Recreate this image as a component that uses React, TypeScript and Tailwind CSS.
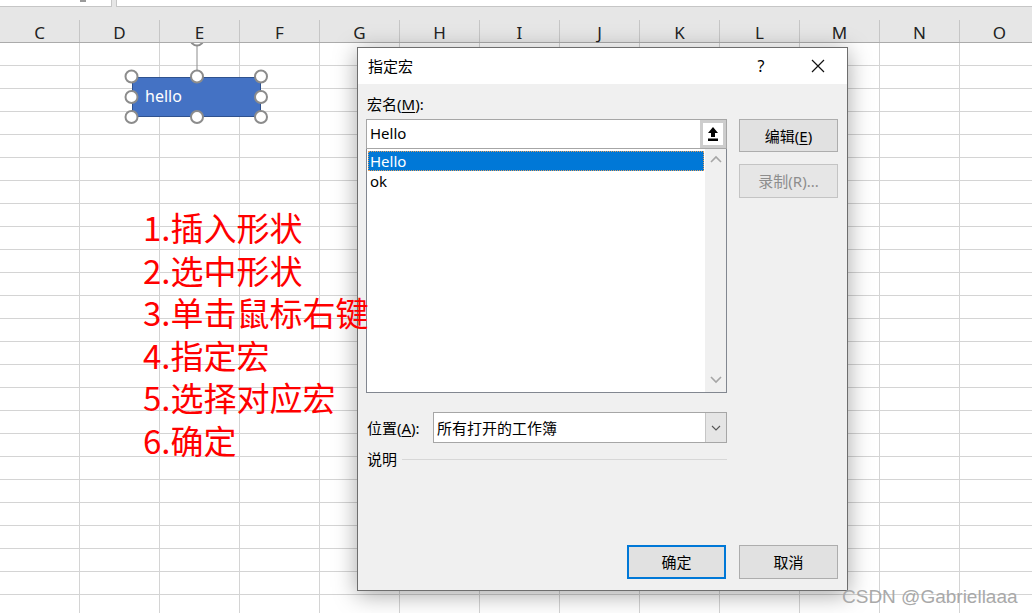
import React from 'react';

const cols = ['C', 'D', 'E', 'F', 'G', 'H', 'I', 'J', 'K', 'L', 'M', 'N', 'O'];
const steps = ['1.插入形状', '2.选中形状', '3.单击鼠标右键', '4.指定宏', '5.选择对应宏', '6.确定'];

const ui = { fontFamily: '"Noto Sans", "Noto Sans CJK SC", sans-serif' };

function Handle({ x, y }: { x: number; y: number }) {
  return <circle cx={x} cy={y} r={6} fill="#fff" stroke="#8c8c8c" strokeWidth={2} />;
}

function Chevron({ up }: { up?: boolean }) {
  return (
    <svg width="12" height="8" viewBox="0 0 12 8">
      <path d={up ? 'M1 7 L6 2 L11 7' : 'M1 1 L6 6 L11 1'} fill="none" stroke="#a6a6a6" strokeWidth="1.6" />
    </svg>
  );
}

function MacroDialog() {
  return (
    <div
      className="absolute left-[357px] top-[47px] w-[491px] h-[544px] border border-[#6e6e6e] bg-[#f0f0f0] flex flex-col shadow-[0_4px_22px_rgba(0,0,0,0.35)] text-[15px] text-black z-10"
      style={ui}
    >
      {/* title bar */}
      <div className="h-[36px] bg-white flex items-center pl-[10px] pr-[6px]">
        <span className="leading-[20px]">指定宏</span>
        <div className="ml-auto w-[46px] h-full flex items-center justify-center text-[16px]">?</div>
        <div className="ml-[11px] w-[46px] h-full flex items-center justify-center">
          <svg width="14" height="14" viewBox="0 0 14 14">
            <path d="M1 1 L13 13 M13 1 L1 13" stroke="#111" strokeWidth="1.2" />
          </svg>
        </div>
      </div>

      <div className="flex-1 flex flex-col px-[8px]">
        <div className="mt-[10px] h-[20px] leading-[20px] pl-[1px]">
          宏名(<span className="underline underline-offset-2">M</span>):
        </div>

        <div className="mt-[5px] flex gap-[12px]">
          <div className="w-[361px] flex flex-col">
            <div className="h-[30px] bg-white border border-[#a6a6a6] flex items-center">
              <span className="pl-[3px] leading-[20px] -mt-[2px]">Hello</span>
              <div className="ml-auto w-[26px] h-full border-[3px] border-[#cdcdcd] bg-white flex items-center justify-center">
                <svg width="12" height="16" viewBox="0 0 12 16">
                  <path d="M6 1 L11 7 L8 7 L8 11 L4 11 L4 7 L1 7 Z" fill="#000" />
                  <rect x="1" y="12.5" width="10" height="2.5" fill="#000" />
                </svg>
              </div>
            </div>
            <div className="h-[244px] bg-white border border-t-0 border-[#828790] flex">
              <div className="flex-1 pt-[2px] px-[1px]">
                <div className="h-[20px] bg-[#0078d7] text-white leading-[20px] pl-[2px] outline outline-1 outline-dotted outline-[#e0a060] -outline-offset-1">
                  Hello
                </div>
                <div className="h-[20px] leading-[20px] pl-[2px]">ok</div>
              </div>
              <div className="w-[21px] bg-[#f0f0f0] flex flex-col items-center justify-between pt-[6px] pb-[8px]">
                <Chevron up />
                <Chevron />
              </div>
            </div>
          </div>

          <div className="w-[99px] flex flex-col">
            <button className="h-[33px] bg-[#e1e1e1] border border-[#adadad] leading-[20px]">
              编辑(<span className="underline underline-offset-2">E</span>)
            </button>
            <button className="mt-[12px] h-[34px] bg-[#e6e6e6] border border-[#c4c4c4] text-[#8d8d8d] leading-[20px]">
              录制(R)...
            </button>
          </div>
        </div>

        <div className="mt-[19px] flex items-center w-[361px]">
          <div className="w-[67px] pl-[1px] leading-[20px]">
            位置(<span className="underline underline-offset-2">A</span>):
          </div>
          <div className="flex-1 h-[31px] bg-white border border-[#a6a6a6] flex items-center">
            <span className="pl-[3px] leading-[20px]">所有打开的工作簿</span>
            <div className="ml-auto w-[21px] h-full bg-[#e5e5e5] border-l border-[#c6c6c6] flex items-center justify-center">
              <svg width="10" height="6" viewBox="0 0 10 6">
                <path d="M1 1 L5 5 L9 1" fill="none" stroke="#555" strokeWidth="1.1" />
              </svg>
            </div>
          </div>
        </div>

        <div className="mt-[6px] h-[20px] flex items-center w-[361px]">
          <span className="pl-[1px] leading-[20px]">说明</span>
          <div className="ml-[5px] flex-1 h-px bg-[#d7d7d7]" />
        </div>

        <div className="mt-auto mb-[11px] pr-[1px] flex justify-end gap-[13px]">
          <button className="w-[99px] h-[34px] bg-[#e1e1e1] border-2 border-[#0078d7] leading-[20px]">确定</button>
          <button className="w-[99px] h-[34px] bg-[#e1e1e1] border border-[#adadad] leading-[20px]">取消</button>
        </div>
      </div>
    </div>
  );
}

export default function App() {
  return (
    <div className="w-[1032px] h-[613px] relative overflow-hidden bg-white">
      <div className="w-[1040px]">
        {/* column header */}
        <div className="h-[43px] bg-[#e6e6e6] border-b border-[#ababab] relative z-[5]">
          <div className="flex h-[7px]">
            <div className="w-[112px] bg-white border-r border-b border-[#c6c6c6] relative">
              <div className="absolute left-[80px] top-0 w-[6px] h-[2px] bg-[#9a9a9a]" />
            </div>
            <div className="w-[4px]" />
            <div className="flex-1 bg-white border-l border-b border-[#c6c6c6]" />
          </div>
          <div className="flex h-[35px] pt-[13px]" style={{ fontFamily: '"Noto Sans", sans-serif' }}>
            {cols.map((c) => (
              <div
                key={c}
                className="w-[80px] shrink-0 border-r border-[#c6c6c6] flex items-center justify-center text-[17px] text-[#222] leading-none pt-[2px]"
              >
                {c}
              </div>
            ))}
          </div>
        </div>

        {/* grid */}
        {Array.from({ length: 25 }).map((_, r) => (
          <div key={r} className="flex h-[23px]">
            {cols.map((c) => (
              <div key={c} className="w-[80px] shrink-0 border-r border-b border-[#d4d4d4]" />
            ))}
          </div>
        ))}
      </div>

      {/* selected shape */}
      <svg className="absolute left-0 top-[43px]" width="300" height="90" viewBox="0 43 300 90">
        <circle cx="197" cy="39" r="6.5" fill="#fff" stroke="#8c8c8c" strokeWidth="2" />
        <line x1="197" y1="45" x2="197" y2="71" stroke="#8c8c8c" strokeWidth="1" />
      </svg>
      <div
        className="absolute left-[132px] top-[77px] w-[129px] h-[40px] bg-[#4472c4] border border-[#2f528f] text-white text-[16px] flex items-center pl-[12px] pb-[3px]"
        style={{ fontFamily: '"Noto Sans", sans-serif' }}
      >
        hello
      </div>
      <svg className="absolute left-0 top-0 pointer-events-none" width="300" height="130">
        <Handle x={131.5} y={76.5} />
        <Handle x={197} y={76.5} />
        <Handle x={261} y={76.5} />
        <Handle x={131.5} y={97} />
        <Handle x={261} y={97} />
        <Handle x={131.5} y={117} />
        <Handle x={197} y={117} />
        <Handle x={261} y={117} />
      </svg>

      <MacroDialog />

      {/* annotation */}
      <div
        className="absolute left-[143px] top-[206px] z-20 text-[33px] leading-[42.5px] text-[#ff0000] whitespace-nowrap"
        style={{ fontFamily: '"Noto Sans CJK SC", sans-serif' }}
      >
        {steps.map((s) => (
          <div key={s}>{s}</div>
        ))}
      </div>

      <div
        className="absolute left-[842px] top-[583px] z-20 text-[19px] text-[#a9a9a9] whitespace-nowrap"
        style={{ fontFamily: '"Liberation Sans", sans-serif' }}
      >
        CSDN @Gabriellaaa
      </div>
    </div>
  );
}
